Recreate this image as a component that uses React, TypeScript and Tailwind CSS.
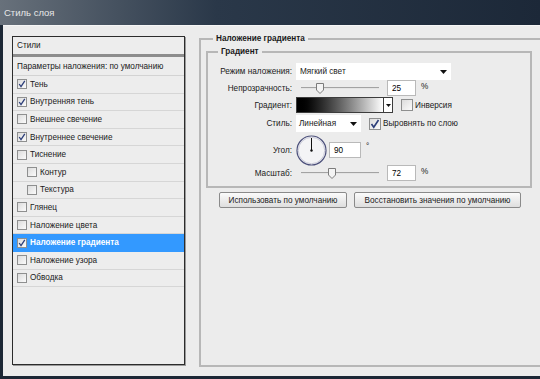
const layers = [
  { name: "Тень", checked: true },
  { name: "Внутренняя тень", checked: true },
  { name: "Внешнее свечение", checked: false },
  { name: "Внутреннее свечение", checked: true },
  { name: "Тиснение", checked: false },
  { name: "Контур", checked: false, sub: true },
  { name: "Текстура", checked: false, sub: true },
  { name: "Глянец", checked: false },
  { name: "Наложение цвета", checked: false },
  { name: "Наложение градиента", checked: true, active: true },
  { name: "Наложение узора", checked: false },
  { name: "Обводка", checked: false },
];

function Check({ checked, size = 10 }: { checked: boolean; size?: number }) {
  return (
    <span
      className="flex shrink-0 items-center justify-center border border-[#8e8f8f] bg-gradient-to-br from-[#dcdcdc] to-[#fbfbfb]"
      style={{ width: size, height: size }}
    >
      {checked && (
        <svg width={size - 2} height={size - 2} viewBox="0 0 8 8">
          <path d="M1.2 4 L3 6.6 L6.8 0.8" fill="none" stroke="#2d3f7a" strokeWidth="1.3" />
        </svg>
      )}
    </span>
  );
}

function Arrow() {
  return (
    <svg width="7" height="4" viewBox="0 0 7 4">
      <path d="M0 0 H7 L3.5 4 Z" fill="#111" />
    </svg>
  );
}

function Slider({ pos }: { pos: number }) {
  return (
    <div className="relative h-full w-[87px]">
      <div className="absolute left-[5px] top-[7px] h-[2px] w-[78px] border-t border-[#a3a3a3] bg-[#e4e4e4]" />
      <svg className="absolute top-[3px]" style={{ left: pos }} width="8" height="11" viewBox="0 0 8 11">
        <path d="M0.5 0.5 H7.5 V7 L4 10.5 L0.5 7 Z" fill="#f4f4f4" stroke="#7c7c7c" />
      </svg>
    </div>
  );
}

function NumBox({ value, w = 29 }: { value: string; w?: number }) {
  return (
    <div
      className="flex h-[16px] items-center border border-[#b9b9b9] bg-white pl-[4px] text-black"
      style={{ width: w }}
    >
      {value}
    </div>
  );
}

export default function App() {
  return (
    <div
      className="flex h-[379px] w-[540px] flex-col overflow-hidden bg-[#1c2735] text-[8.2px] leading-[11px] text-[#1a1a1a]"
      style={{ fontFamily: '"Liberation Sans", Arial, sans-serif' }}
    >
      {/* title bar */}
      <div className="flex h-[25px] shrink-0 items-center bg-gradient-to-r from-[#68717b] via-[#2a3849] via-40% to-[#1c2838] pl-[4px] text-[9.5px] text-[#e8e8e8]">
        Стиль слоя
      </div>

      {/* body */}
      <div className="ml-[3px] flex h-[351px] w-[537px] shrink-0 overflow-hidden border-t border-[#f6f6f6] bg-[#ececec]">
        {/* styles list */}
        <div className="ml-[9px] mt-[10px] flex h-[329px] w-[173px] shrink-0 flex-col border border-[#2c2c2c] bg-[#ededed] shadow-[1px_1px_0_#9a9a9a]">
          <div className="flex h-[20px] shrink-0 items-center border-b-[3px] border-[#8d8d8d] pl-[4px]">Стили</div>
          <div className="flex h-[19px] shrink-0 items-center border-b border-[#d3d3d3] pl-[4px]">
            Параметры наложения: по умолчанию
          </div>
          {layers.map((l) => (
            <div
              key={l.name}
              className={
                "flex h-[17.6px] shrink-0 items-center gap-[2px] border-b " +
                (l.active
                  ? "border-[#3399ff] bg-[#3399ff] font-bold text-white"
                  : "border-[#d6d6d6]")
              }
              style={{ paddingLeft: l.sub ? 14 : 4 }}
            >
              <Check checked={l.checked} />
              <span className="ml-[1px]">{l.name}</span>
            </div>
          ))}
        </div>

        {/* settings */}
        <fieldset className="ml-[14px] mt-[7px] h-[334px] min-w-[360px] shrink-0 border-2 border-[#b7b7b7]">
          <legend className="ml-[12px] px-[3px] font-bold leading-[12px]">Наложение градиента</legend>

          <fieldset className="ml-[5px] mt-[1px] h-[142px] w-[326px] border-2 border-[#b7b7b7] pt-[5px]">
            <legend className="ml-[10px] px-[3px] font-bold leading-[12px]">Градиент</legend>

            <div className="flex h-[17px] items-center">
              <span className="w-[84px] text-right">Режим наложения:</span>
              <div className="ml-[4px] flex h-full w-[155px] items-center justify-between bg-white pl-[4px] pr-[4px]">
                <span>Мягкий свет</span>
                <Arrow />
              </div>
            </div>

            <div className="flex h-[16px] items-center">
              <span className="w-[84px] text-right">Непрозрачность:</span>
              <div className="ml-[4px] h-full">
                <Slider pos={20} />
              </div>
              <div className="ml-[4px]">
                <NumBox value="25" />
              </div>
              <span className="ml-[5px] -translate-y-[2px]">%</span>
            </div>

            <div className="mt-[1px] flex h-[16px] items-center">
              <span className="w-[84px] text-right">Градиент:</span>
              <div className="ml-[4px] flex h-full w-[97px] border border-[#3c3c3c]">
                <div className="h-full flex-1 bg-gradient-to-r from-black to-white" />
                <div className="flex h-full w-[9px] items-center justify-center border-l border-[#3c3c3c] bg-white">
                  <svg width="5" height="3" viewBox="0 0 5 3">
                    <path d="M0 0 H5 L2.5 3 Z" fill="#111" />
                  </svg>
                </div>
              </div>
              <div className="ml-[8px]">
                <Check checked={false} size={12} />
              </div>
              <span className="ml-[2px]">Инверсия</span>
            </div>

            <div className="mt-[2px] flex h-[17px] items-center">
              <span className="w-[84px] text-right">Стиль:</span>
              <div className="ml-[4px] flex h-full w-[65px] items-center justify-between bg-white pl-[3px] pr-[4px]">
                <span>Линейная</span>
                <Arrow />
              </div>
              <div className="ml-[8px]">
                <Check checked size={12} />
              </div>
              <span className="ml-[2px]">Выровнять по слою</span>
            </div>

            <div className="mt-[3px] flex h-[30px] items-center">
              <span className="w-[84px] text-right">Угол:</span>
              <svg className="ml-[4px]" width="31" height="31" viewBox="0 0 31 31">
                <circle cx="15.5" cy="15.5" r="14.5" fill="#f4f4f6" stroke="#4b4f7a" strokeWidth="1.2" />
                <circle cx="15.5" cy="15.5" r="13.2" fill="none" stroke="#c9cad8" strokeWidth="1" />
                <line x1="15.5" y1="15.5" x2="15.5" y2="3" stroke="#111" strokeWidth="1" />
                <circle cx="15.5" cy="15.5" r="1.2" fill="#111" />
              </svg>
              <div className="ml-[2px]">
                <NumBox value="90" w={32} />
              </div>
              <span className="ml-[5px] -translate-y-[4px]">°</span>
            </div>

            <div className="flex h-[16px] items-center">
              <span className="w-[84px] text-right">Масштаб:</span>
              <div className="ml-[4px] h-full">
                <Slider pos={32} />
              </div>
              <div className="ml-[4px]">
                <NumBox value="72" />
              </div>
              <span className="ml-[5px] -translate-y-[2px]">%</span>
            </div>
          </fieldset>

          <div className="ml-[18px] mt-[4px] flex gap-[7px]">
            <button className="flex h-[16px] w-[128px] items-center justify-center rounded-[2px] border border-[#8a8a8a] bg-gradient-to-b from-[#fbfbfb] to-[#dedede]">
              Использовать по умолчанию
            </button>
            <button className="flex h-[16px] w-[167px] items-center justify-center rounded-[2px] border border-[#8a8a8a] bg-gradient-to-b from-[#fbfbfb] to-[#dedede]">
              Восстановить значения по умолчанию
            </button>
          </div>
        </fieldset>
      </div>
    </div>
  );
}
